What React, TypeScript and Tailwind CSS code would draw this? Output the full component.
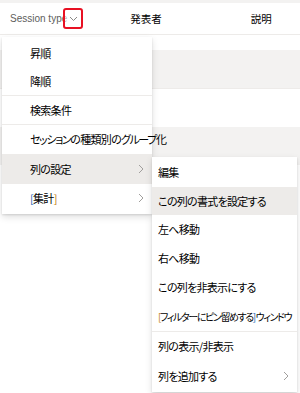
import React from 'react';

const jp = "font-['Noto_Sans_CJK_JP','Noto_Sans',sans-serif] [font-feature-settings:'palt']";

function Chevron({ className }: { className?: string }) {
  return (
    <svg width="6" height="10" viewBox="0 0 6 10" className={className}>
      <path d="M1 1l4 4-4 4" fill="none" stroke="#a19f9d" strokeWidth="1" />
    </svg>
  );
}

type Item = { label: React.ReactNode; h: number; sub?: boolean; active?: boolean; sepAfter?: boolean };

const mainItems: Item[] = [
  { label: '昇順', h: 28 },
  { label: '降順', h: 28, sepAfter: true },
  { label: '検索条件', h: 28, sepAfter: true },
  {
    label: (
      <>
        <span className="tracking-[-1.4px]">セッション</span>の種類別の<span className="tracking-[-1.4px]">グループ</span>化
      </>
    ),
    h: 29,
  },
  { label: '列の設定', h: 30, sub: true, active: true },
  {
    label: (
      <>
        <span className="text-[#1a5fb4]">[</span>集計<span className="text-[#c27c0e]">]</span>
      </>
    ),
    h: 28,
    sub: true,
  },
];

const subItems: Item[] = [
  { label: '編集', h: 29 },
  { label: 'この列の書式を設定する', h: 28, active: true },
  { label: '左へ移動', h: 29 },
  { label: '右へ移動', h: 29 },
  { label: 'この列を非表示にする', h: 29 },
  {
    label: (
      <span className="text-[10px] tracking-[-1.4px]">
        <span className="text-[#c27c0e]">[</span>フィルターにピン留めする<span className="text-[#1a5fb4]">]</span> ウィンドウ
      </span>
    ),
    h: 29,
    sepAfter: true,
  },
  { label: '列の表示/非表示', h: 29 },
  { label: '列を追加する', h: 30, sub: true },
];

function Menu({ items, pl, className }: { items: Item[]; pl: string; className: string }) {
  return (
    <div
      className={`absolute bg-white shadow-[0_3px_7px_rgba(0,0,0,0.13),0_0.6px_1.8px_rgba(0,0,0,0.11)] ${className}`}
    >
      {items.map((it, i) => (
        <React.Fragment key={i}>
          <div
            className={`flex items-center justify-between pr-[8px] ${pl} ${it.active ? 'bg-[#edebe9]' : ''}`}
            style={{ height: it.h }}
          >
            <span className="whitespace-nowrap text-[11px] tracking-[-0.7px] text-black">{it.label}</span>
            {it.sub && <Chevron className="shrink-0" />}
          </div>
          {it.sepAfter && <div className="h-px bg-[#edebe9]" />}
        </React.Fragment>
      ))}
    </div>
  );
}

export default function App() {
  return (
    <div className={`relative w-[300px] h-[393px] overflow-hidden bg-white ${jp}`}>
      <div className="h-[3px] bg-[#f3f2f1]" />
      <div className="flex h-[32px] items-center border-b border-[#edebe9]">
        <span className="whitespace-nowrap pl-[10px] font-['Liberation_Sans',sans-serif] text-[10px] text-[#605e5c]">
          Session type
        </span>
        <div className="relative -ml-[4px] flex h-[21px] w-[20px] items-center justify-center rounded-[3px] border-2 border-[#e81123] bg-white/60">
          <svg width="9" height="6" viewBox="0 0 9 6">
            <path d="M1 1l3.5 3.5L8 1" fill="none" stroke="#8a8886" strokeWidth="1" />
          </svg>
        </div>
        <span className="ml-[47px] text-[10.5px] text-black">発表者</span>
        <span className="ml-[89px] text-[10.5px] text-black">説明</span>
      </div>
      <div className="h-[15px]" />
      <div className="h-[38px] bg-[#f3f2f1]" />
      <div className="h-[39px] border-t border-[#edebe9]" />
      <div className="h-[38px] bg-[#f3f2f1]" />

      <Menu items={mainItems} pl="pl-[28px]" className="left-[2px] top-[37px] w-[150px] pt-[2px] pb-[2px]" />
      <Menu items={subItems} pl="pl-[6px]" className="left-[152px] top-[157px] w-[145px] pt-[1px] pb-[1px]" />
    </div>
  );
}
